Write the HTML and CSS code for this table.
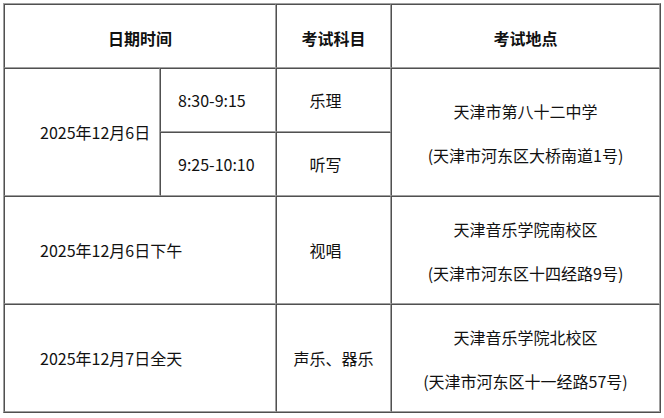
FILE: index.html
```html
<!DOCTYPE html>
<html lang="zh">
<head>
<meta charset="utf-8">
<link rel="stylesheet" href="styles.css">
</head>
<body>
<div class="sched">
  <div class="cell head c12 r1">日期时间</div>
  <div class="cell head c3 r1">考试科目</div>
  <div class="cell head c4 r1">考试地点</div>

  <div class="cell date c1 r23">2025年12月6日</div>
  <div class="cell time c2 r2">8:30-9:15</div>
  <div class="cell subj c3 r2"><span class="shift">乐理</span></div>
  <div class="cell loc c4 r23"><span>天津市第八十二中学</span><span>(天津市河东区大桥南道1号)</span></div>
  <div class="cell time c2 r3">9:25-10:10</div>
  <div class="cell subj c3 r3"><span class="shift">听写</span></div>

  <div class="cell date c12 r4">2025年12月6日下午</div>
  <div class="cell subj c3 r4"><span class="shift">视唱</span></div>
  <div class="cell loc c4 r4"><span>天津音乐学院南校区</span><span>(天津市河东区十四经路9号)</span></div>

  <div class="cell date c12 r5">2025年12月7日全天</div>
  <div class="cell subj c3 r5">声乐、器乐</div>
  <div class="cell loc c4 r5"><span>天津音乐学院北校区</span><span>(天津市河东区十一经路57号)</span></div>
</div>
</body>
</html>
```

FILE: styles.css
```css
html, body {
  margin: 0;
  padding: 0;
  background: #ffffff;
}
body {
  padding: 3px;
  font-family: "Noto Sans CJK SC", "Noto Sans", sans-serif;
  font-size: 16px;
  color: #111111;
}
.sched {
  display: grid;
  grid-template-columns: 156px 116px 115px 269px;
  grid-template-rows: 64px 64px 64px 108px 108px;
  width: 656px;
  border-style: solid;
  border-width: 1px;
  border-color: #a0a0a0 #505050 #505050 #a0a0a0;
}
.cell {
  box-sizing: border-box;
  border-style: solid;
  border-width: 1px;
  border-color: #505050 #a0a0a0 #a0a0a0 #505050;
  display: flex;
  align-items: center;
  justify-content: center;
  line-height: 22px;
  white-space: nowrap;
}
.head { font-weight: bold; padding-top: 4px; }
.date { justify-content: flex-start; padding-left: 35px; }
.time { justify-content: flex-start; padding-left: 17px; }
.shift { padding-right: 16px; }
.loc { flex-direction: column; gap: 22px; padding-top: 2px; }

.c1 { grid-column: 1; }
.c2 { grid-column: 2; }
.c12 { grid-column: 1 / 3; }
.c3 { grid-column: 3; }
.c4 { grid-column: 4; }
.r1 { grid-row: 1; }
.r2 { grid-row: 2; }
.r3 { grid-row: 3; }
.r23 { grid-row: 2 / 4; }
.r4 { grid-row: 4; }
.r5 { grid-row: 5; }
```
